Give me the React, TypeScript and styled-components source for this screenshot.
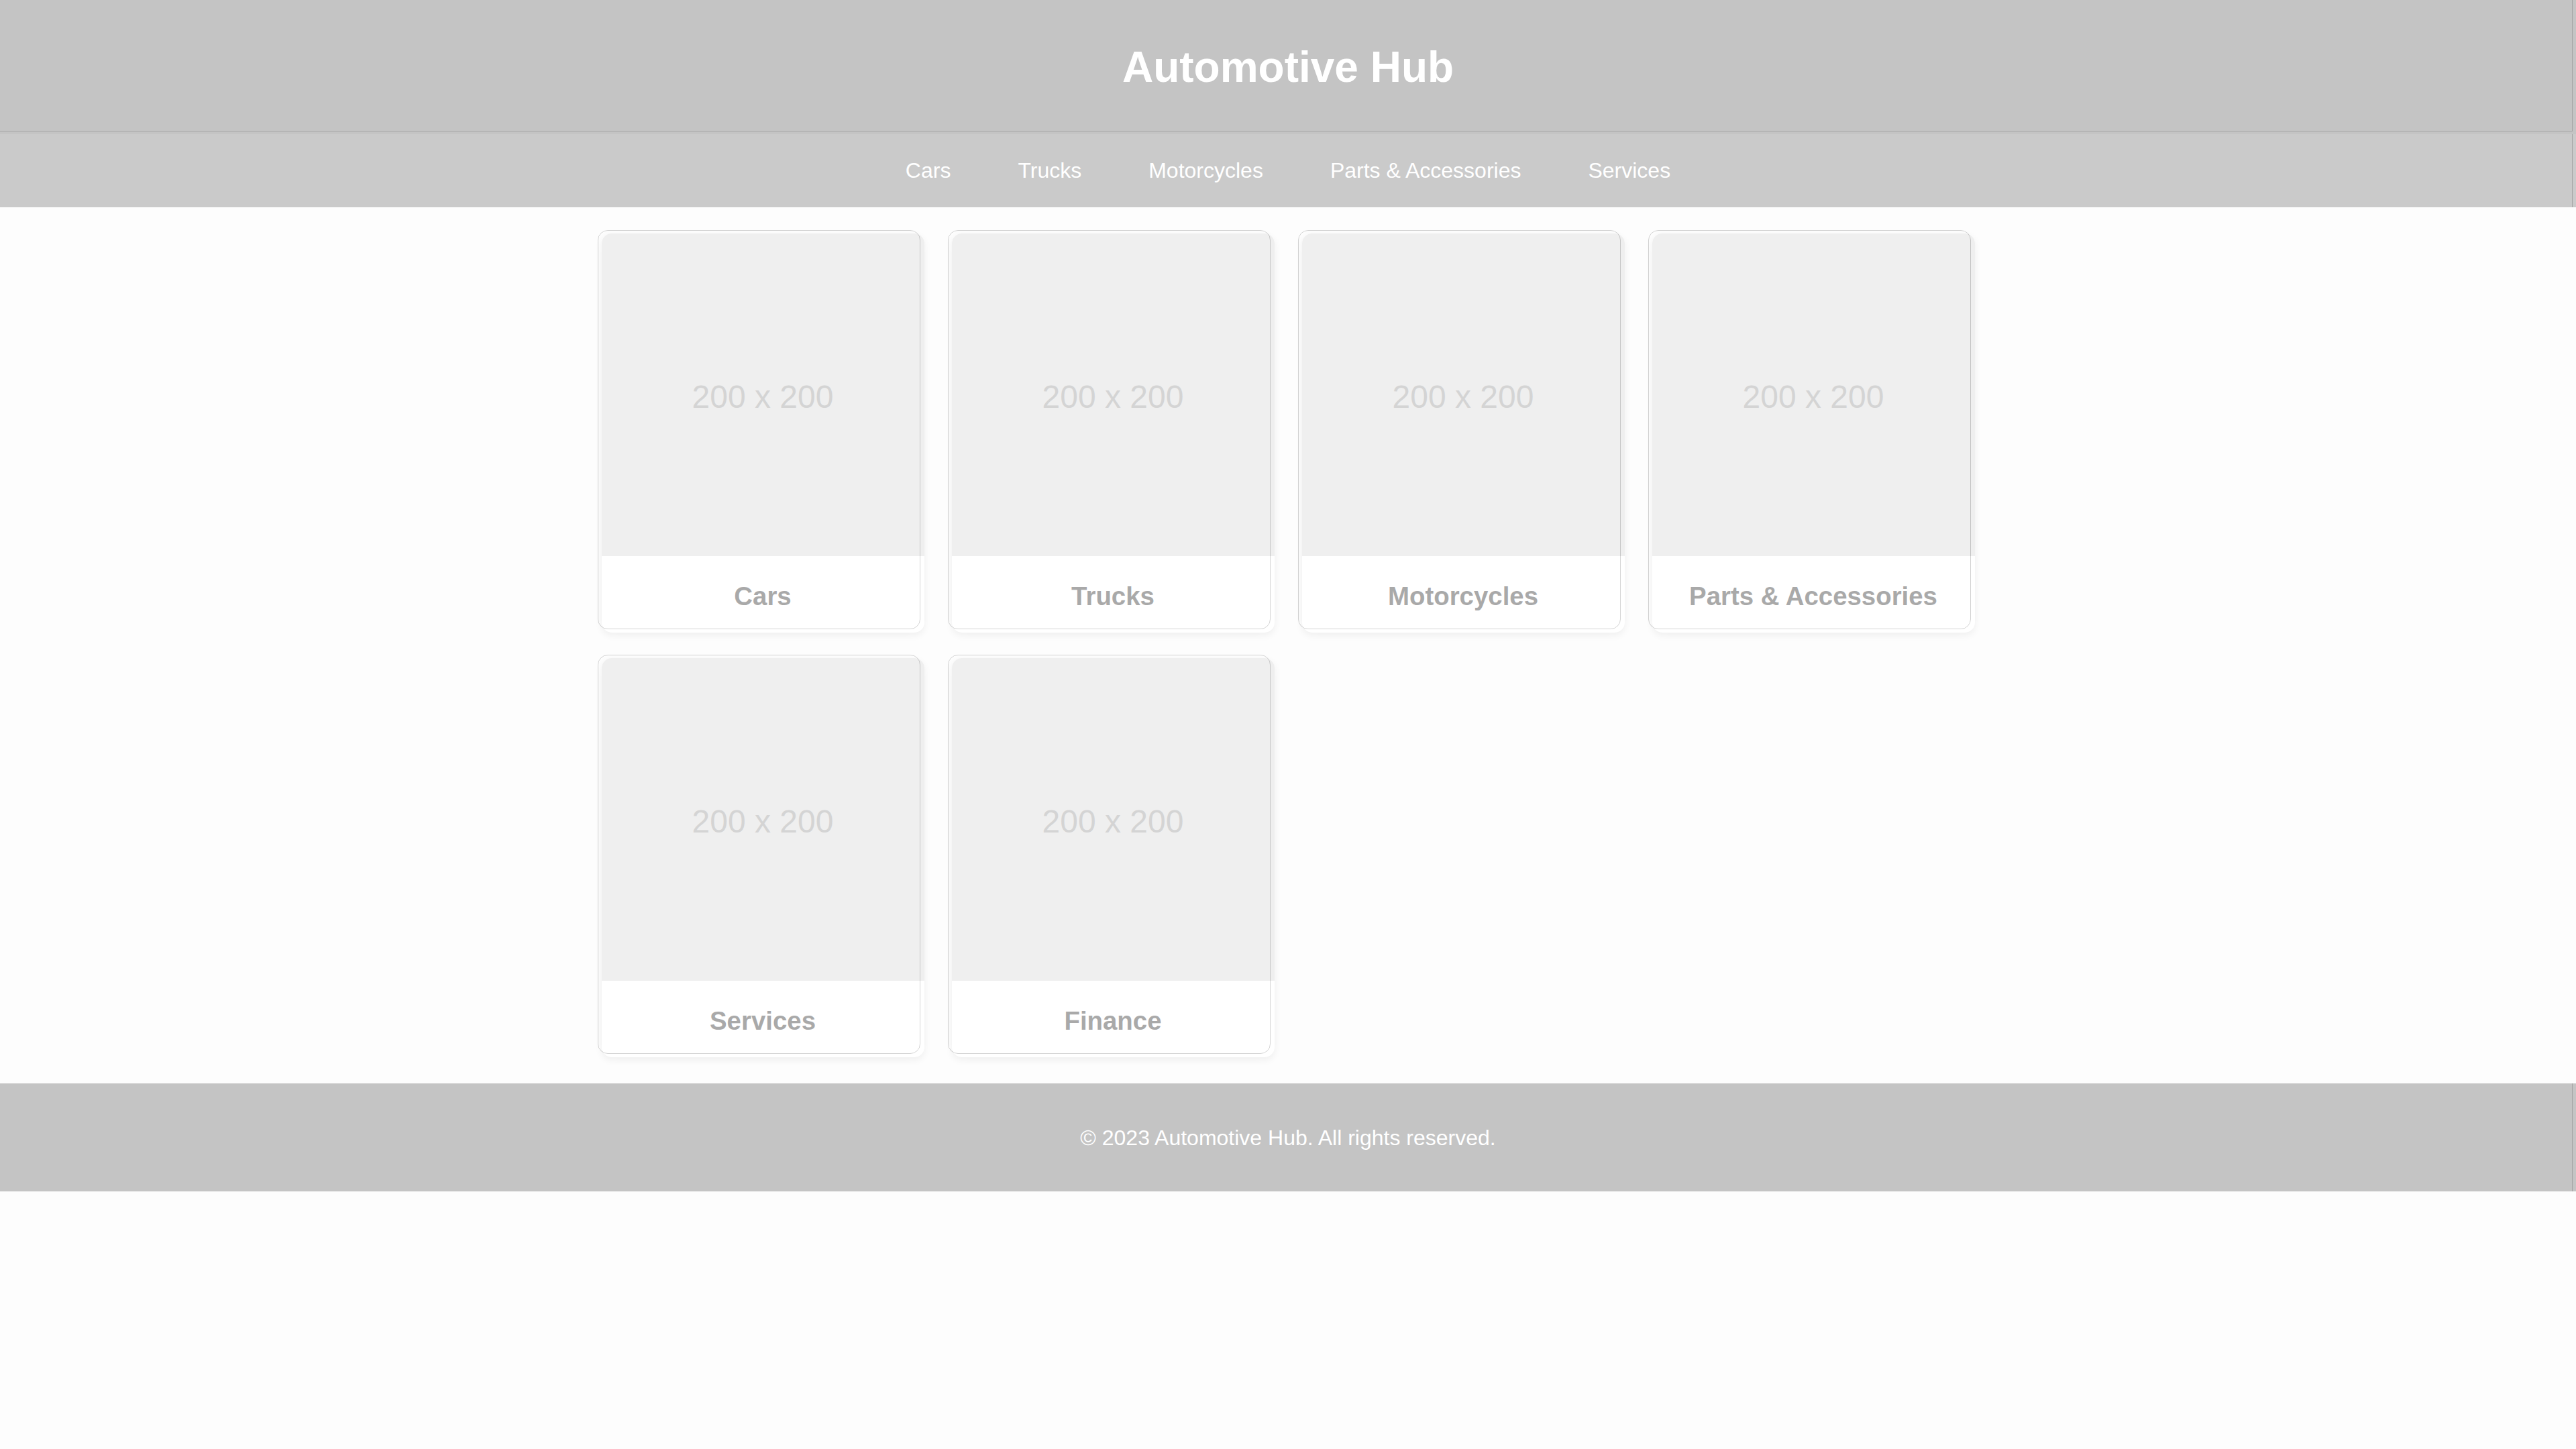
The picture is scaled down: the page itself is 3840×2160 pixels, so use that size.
import React from "react";
import styled, { createGlobalStyle } from "styled-components";

const GlobalStyle = createGlobalStyle`
  html, body {
    margin: 0;
    padding: 0;
    background: #fdfdfd;
    font-family: "Liberation Sans", Arial, Helvetica, sans-serif;
  }
  * { box-sizing: border-box; }
`;

const Page = styled.div`
  display: flex;
  flex-direction: column;
  min-height: 2160px;
  background: #fdfdfd;
`;

const Header = styled.header`
  height: 200px;
  display: flex;
  align-items: center;
  justify-content: center;
  background: #c4c4c4;
  box-shadow: inset 0 -4px 0 #c4c4c4, inset -5px 0 0 #c4c4c4,
    inset 0 -5px 0 #a4a4a4, inset -6px 0 0 #a4a4a4;
`;

const Title = styled.h1`
  margin: 0;
  font-size: 64px;
  font-weight: 700;
  color: #ffffff;
  line-height: normal;
`;

const Nav = styled.nav`
  height: 109px;
  display: flex;
  align-items: center;
  justify-content: center;
  gap: 100px;
  background: #cacaca;
  box-shadow: inset -5px 0 0 #cacaca, inset -6px 0 0 #a4a4a4;
`;

const NavLink = styled.a`
  font-size: 32px;
  color: #ffffff;
  text-decoration: none;
  line-height: normal;
  cursor: pointer;
`;

const Main = styled.main`
  padding: 39px 0 39px;
  display: grid;
  grid-template-columns: repeat(4, 481px);
  gap: 38px 41px;
  justify-content: center;
`;

const Card = styled.div`
  position: relative;
  display: flex;
  flex-direction: column;
  background: #ffffff;
  border-radius: 15px;
  box-shadow: 0 4px 12px rgba(0, 0, 0, 0.06);

  &::before {
    content: "";
    position: absolute;
    top: -5px;
    left: -6px;
    right: 6px;
    bottom: 5px;
    border: 1px solid rgba(0, 0, 0, 0.17);
    border-radius: 15px;
    pointer-events: none;
  }
`;

const Placeholder = styled.div`
  height: 481px;
  padding-top: 6px;
  display: flex;
  align-items: center;
  justify-content: center;
  background: #efefef;
  border-radius: 15px 15px 0 0;
  font-size: 48px;
  color: #d4d4d4;
`;

const Caption = styled.div`
  height: 114px;
  padding-top: 38px;
  text-align: center;
  font-size: 38.4px;
  font-weight: 700;
  color: #a9a9a9;
  line-height: normal;
`;

const Footer = styled.footer`
  height: 161px;
  padding-top: 2px;
  display: flex;
  align-items: center;
  justify-content: center;
  background: #c4c4c4;
  box-shadow: inset -5px 0 0 #c4c4c4, inset -6px 0 0 #a4a4a4;
`;

const FooterText = styled.p`
  margin: 0;
  font-size: 32px;
  color: #ffffff;
  line-height: normal;
`;

const navItems = ["Cars", "Trucks", "Motorcycles", "Parts & Accessories", "Services"];
const categories = ["Cars", "Trucks", "Motorcycles", "Parts & Accessories", "Services", "Finance"];

export default function App() {
  return (
    <>
      <GlobalStyle />
      <Page>
        <Header>
          <Title>Automotive Hub</Title>
        </Header>
        <Nav>
          {navItems.map((item) => (
            <NavLink key={item}>{item}</NavLink>
          ))}
        </Nav>
        <Main>
          {categories.map((c) => (
            <Card key={c}>
              <Placeholder>200 x 200</Placeholder>
              <Caption>{c}</Caption>
            </Card>
          ))}
        </Main>
        <Footer>
          <FooterText>© 2023 Automotive Hub. All rights reserved.</FooterText>
        </Footer>
      </Page>
    </>
  );
}
